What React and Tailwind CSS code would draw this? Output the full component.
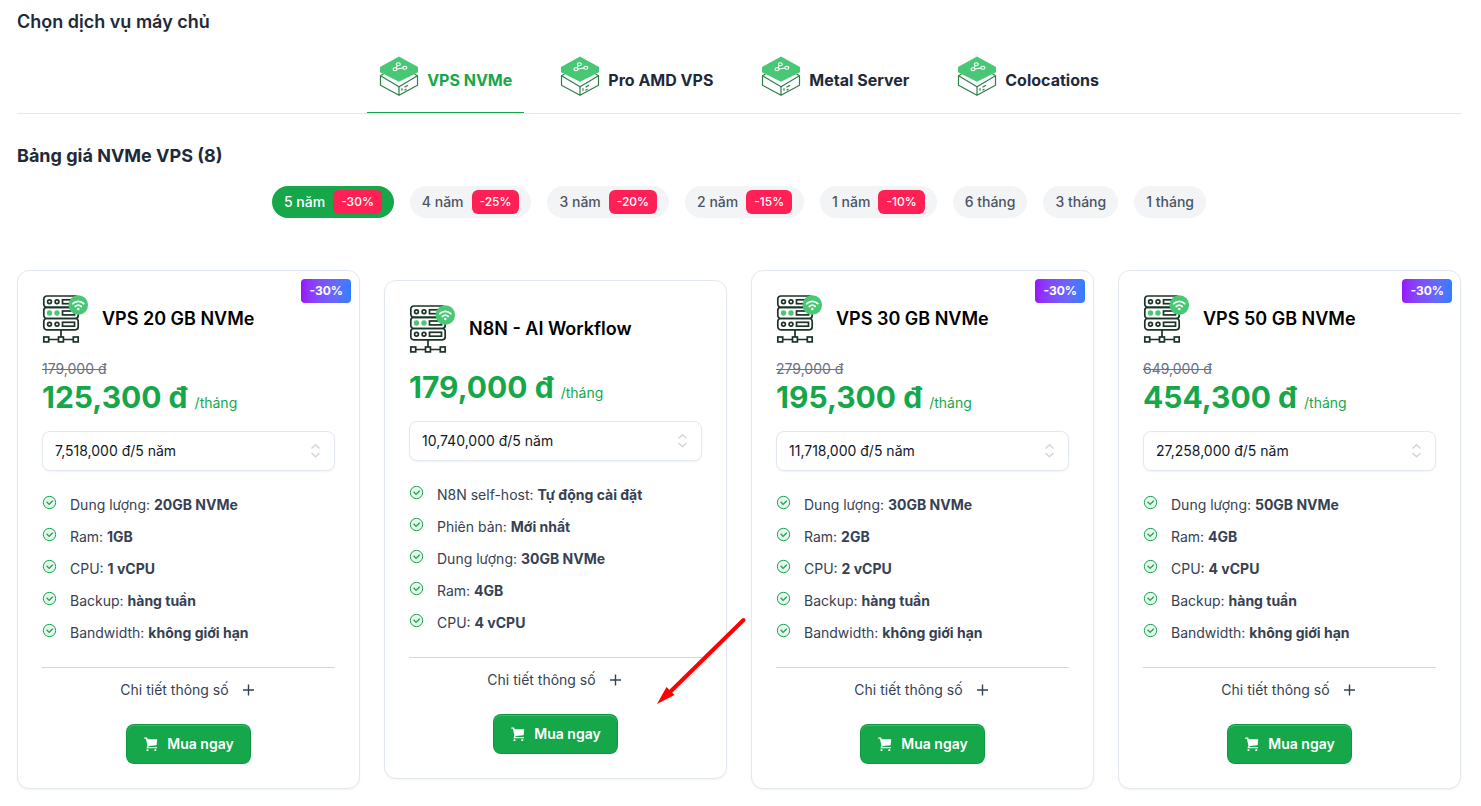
import React, { useState } from 'react';

const tabs = ['VPS NVMe', 'Pro AMD VPS', 'Metal Server', 'Colocations'];

const periods = [
  { label: '5 năm', discount: '-30%' },
  { label: '4 năm', discount: '-25%' },
  { label: '3 năm', discount: '-20%' },
  { label: '2 năm', discount: '-15%' },
  { label: '1 năm', discount: '-10%' },
  { label: '6 tháng' },
  { label: '3 tháng' },
  { label: '1 tháng' },
];

const plans = [
  {
    id: 'nvme-20',
    name: 'VPS 20 GB NVMe',
    badge: '-30%',
    oldPrice: '179,000 đ',
    price: '125,300 đ',
    total: '7,518,000 đ/5 năm',
    specs: [
      ['Dung lượng', '20GB NVMe'],
      ['Ram', '1GB'],
      ['CPU', '1 vCPU'],
      ['Backup', 'hàng tuần'],
      ['Bandwidth', 'không giới hạn'],
    ],
  },
  {
    id: 'n8n',
    name: 'N8N - AI Workflow',
    price: '179,000 đ',
    total: '10,740,000 đ/5 năm',
    highlighted: true,
    specs: [
      ['N8N self-host', 'Tự động cài đặt'],
      ['Phiên bản', 'Mới nhất'],
      ['Dung lượng', '30GB NVMe'],
      ['Ram', '4GB'],
      ['CPU', '4 vCPU'],
    ],
  },
  {
    id: 'nvme-30',
    name: 'VPS 30 GB NVMe',
    badge: '-30%',
    oldPrice: '279,000 đ',
    price: '195,300 đ',
    total: '11,718,000 đ/5 năm',
    specs: [
      ['Dung lượng', '30GB NVMe'],
      ['Ram', '2GB'],
      ['CPU', '2 vCPU'],
      ['Backup', 'hàng tuần'],
      ['Bandwidth', 'không giới hạn'],
    ],
  },
  {
    id: 'nvme-50',
    name: 'VPS 50 GB NVMe',
    badge: '-30%',
    oldPrice: '649,000 đ',
    price: '454,300 đ',
    total: '27,258,000 đ/5 năm',
    specs: [
      ['Dung lượng', '50GB NVMe'],
      ['Ram', '4GB'],
      ['CPU', '4 vCPU'],
      ['Backup', 'hàng tuần'],
      ['Bandwidth', 'không giới hạn'],
    ],
  },
];

const LayersIcon = () => (
  <svg className="size-10 shrink-0" viewBox="0 0 40 40" fill="none" aria-hidden="true">
    <g stroke="#2f7d4b" strokeWidth="1.2" strokeLinejoin="round">
      <path d="M4.500 18L1.500 19.700 20 30.800l18.500-11.100-3-1.700" />
      <path d="M1.500 19.700v9.500L20 39.300l18.500-10.100v-9.500M20 30.800v8.500" />
      <path d="M23 32.200v2.600M25.500 31.300l3.500-2M25.500 34.200l2-1.200" />
    </g>
    <path d="M20 .6l19 10.400v5.200L20 25.800 1 16.200V11z" fill="#48c774" />
    <g stroke="#fff" strokeWidth="1.100">
      <ellipse cx="19.300" cy="8.300" rx="2" ry="1.500" />
      <ellipse cx="16" cy="13.300" rx="2" ry="1.500" />
      <ellipse cx="25.800" cy="11.700" rx="2" ry="1.500" />
      <path d="M18.300 9.800l-1.400 2.200M18 13l5.900-1" />
    </g>
  </svg>
);

const ServerIcon = () => (
  <svg className="size-12 shrink-0" viewBox="0 0 48 48" fill="none" aria-hidden="true">
    <g stroke="#1b3427" strokeWidth="1.700">
      <rect x="1.800" y="1" width="34.400" height="11.300" rx="3" />
      <rect x="1.800" y="12.300" width="34.400" height="11.200" rx="3" />
      <rect x="1.800" y="23.500" width="34.400" height="11.300" rx="3" />
      <circle cx="7.500" cy="6.700" r="1.900" />
      <circle cx="15" cy="6.700" r="1.900" />
      <circle cx="7.500" cy="29.200" r="1.900" />
      <circle cx="15" cy="29.200" r="1.900" />
      <rect x="20.500" y="4.800" width="12" height="3.900" />
      <rect x="20.500" y="16" width="12" height="3.900" />
      <rect x="20.500" y="27.300" width="12" height="3.900" />
      <path d="M19 34.800v7.200M6.500 44.500h10M21.500 44.500h10" />
      <rect x="1.800" y="42" width="4.900" height="4.900" />
      <rect x="16.500" y="42" width="4.900" height="4.900" />
      <rect x="31.300" y="42" width="4.900" height="4.900" />
    </g>
    <circle cx="7.500" cy="18" r="2.700" fill="#48c774" />
    <circle cx="15" cy="18" r="2.700" fill="#48c774" />
    <circle cx="36.300" cy="10" r="9.800" fill="#48c774" />
    <g stroke="#fff" strokeWidth="1.800" strokeLinecap="round">
      <path d="M30.800 8.700c3.200-3.200 7.800-3.200 11 0" />
      <path d="M33.300 11.500c1.800-1.700 4.200-1.700 6 0" />
    </g>
    <circle cx="36.300" cy="14" r="1.300" fill="#fff" />
  </svg>
);

const CheckIcon = () => (
  <svg className="size-4 shrink-0" viewBox="0 0 16 16" fill="none" stroke="#16a74a" aria-hidden="true">
    <circle cx="7.500" cy="7.500" r="6.200" fill="#e6f6ec" />
    <path d="M4.600 6.800l2.500 2.600 3.700-3.700" strokeWidth="1.300" />
  </svg>
);

const CartIcon = () => (
  <svg className="size-4 shrink-0" viewBox="0 0 16 16" fill="currentColor" aria-hidden="true">
    <path d="M1.200 1.500h2.900l.7 1.700h9.400l-.6 6.100-7.900.7-.4 1.100h8.700v1.200H3.400l1-2.900L2.900 2.700H1.200z" />
    <rect x="3.500" y="13.200" width="2" height="1.800" rx=".5" />
    <rect x="11.300" y="13.200" width="2" height="1.800" rx=".5" />
  </svg>
);

const PlusIcon = () => (
  <svg className="size-4" viewBox="0 0 16 16" stroke="currentColor" strokeWidth="1.400" aria-hidden="true">
    <path d="M7.500 2.500v11M2 8h11" />
  </svg>
);

const PointerArrow = () => (
  <svg
    className="pointer-events-none absolute -right-[22px] bottom-[72px] z-10 h-[90px] w-[92px]"
    viewBox="0 0 92 90"
    aria-hidden="true"
  >
    <path d="M87.500 4L13 77" stroke="#f00" strokeWidth="4" strokeLinecap="round" />
    <path d="M1 88l9.500-17 8 8z" fill="#f00" />
  </svg>
);

const PlanCard = ({ plan }) => (
  <article className="relative rounded-xl border border-slate-200 bg-white p-6 shadow-xs">
    {plan.badge && (
      <span className="absolute top-2 right-2 rounded-sm bg-linear-to-r from-purple-600 to-blue-500 px-2 py-1 text-xs font-bold text-white">
        {plan.badge}
      </span>
    )}

    {/* Name */}
    <div className="flex items-center gap-3">
      <ServerIcon />
      <h3 className="text-lg font-semibold text-black">{plan.name}</h3>
    </div>

    {/* Price */}
    <div className="mt-4">
      {plan.oldPrice && <p className="text-sm text-gray-500 line-through">{plan.oldPrice}</p>}
      <p className="text-3xl font-bold text-[#16a74a]">
        {plan.price} <span className="text-sm font-normal">/tháng</span>
      </p>
    </div>

    <div className="relative mt-4">
      <select
        aria-label={plan.name}
        className="h-10 w-full appearance-none rounded-lg border border-slate-200 bg-white px-3 text-sm text-gray-900 shadow-xs"
      >
        <option>{plan.total}</option>
      </select>
      <svg
        className="pointer-events-none absolute top-[10px] right-[10px] size-5 text-gray-300"
        viewBox="0 0 20 20"
        fill="none"
        stroke="currentColor"
        strokeWidth="1.500"
        aria-hidden="true"
      >
        <path d="M6.500 7.500L10.500 3.800 14.500 7.500M6.500 12L10.500 15.700 14.500 12" />
      </svg>
    </div>

    {/* Specs */}
    <ul className="mt-6 flex flex-col gap-3 text-sm text-gray-700">
      {plan.specs.map(([label, value]) => (
        <li key={label} className="flex items-start gap-3">
          <CheckIcon />
          <span>
            {label}: <strong className="font-bold">{value}</strong>
          </span>
        </li>
      ))}
    </ul>

    <div className="mt-6 flex justify-center border-t border-gray-300 pt-3">
      <button type="button" className="flex items-center gap-3 text-sm text-gray-700">
        Chi tiết thông số
        <PlusIcon />
      </button>
    </div>

    <div className="mt-6 flex justify-center">
      <button
        type="button"
        className="flex h-10 items-center gap-2 rounded-lg border border-green-700/40 bg-[#16a74a] px-4 text-sm font-semibold text-white inset-shadow-[0_1px_0_#ffffff33]"
      >
        <CartIcon />
        Mua ngay
      </button>
    </div>

    {plan.highlighted && <PointerArrow />}
  </article>
);

const App = () => {
  const [activeTab, setActiveTab] = useState(tabs[0]);
  const [activePeriod, setActivePeriod] = useState(periods[0].label);

  return (
    <main className="bg-white pt-2 pr-5 pb-4 pl-[17px] font-[Inter,sans-serif] text-gray-800">
      <h1 className="text-lg leading-7 font-semibold">Chọn dịch vụ máy chủ</h1>

      {/* Service tabs */}
      <nav className="mt-5 flex flex-wrap justify-center gap-6 border-b border-gray-200">
        {tabs.map((tab) => (
          <button
            key={tab}
            type="button"
            onClick={() => setActiveTab(tab)}
            className={`flex items-center gap-2 border-b px-3 pb-4 font-bold ${
              activeTab === tab ? 'border-[#16a74a] text-[#16a74a]' : 'border-transparent'
            }`}
          >
            <LayersIcon />
            <span className="pt-2">{tab}</span>
          </button>
        ))}
      </nav>

      <h2 className="mt-7 text-lg leading-7 font-bold">Bảng giá NVMe VPS (8)</h2>

      {/* Billing periods */}
      <div className="mt-4 flex flex-wrap justify-center gap-4">
        {periods.map(({ label, discount }) => (
          <button
            key={label}
            type="button"
            onClick={() => setActivePeriod(label)}
            className={`flex h-8 items-center gap-2 rounded-full px-3 text-sm font-medium ${
              activePeriod === label ? 'bg-[#16a74a] text-white' : 'bg-gray-100 text-gray-600'
            }`}
          >
            {label}
            {discount && (
              <span className="rounded-md bg-rose-500 px-2 py-1 text-xs font-medium text-white">{discount}</span>
            )}
          </button>
        ))}
      </div>

      {/* Plans */}
      <section className="mt-[52px] grid grid-cols-1 items-center gap-6 sm:grid-cols-2 lg:grid-cols-4">
        {plans.map((plan) => (
          <PlanCard key={plan.id} plan={plan} />
        ))}
      </section>
    </main>
  );
};

export default App;
